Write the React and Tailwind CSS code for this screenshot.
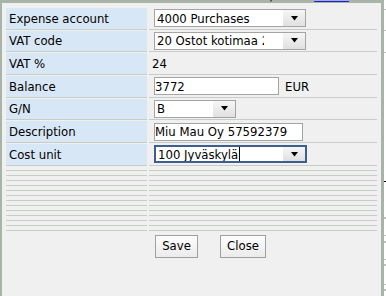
import React from 'react';

const font = { fontFamily: '"DejaVu Sans Condensed", "Liberation Sans", Arial, sans-serif' };

function Arrow() {
  return (
    <svg width="9" height="5" viewBox="0 0 9 5" className="block">
      <path d="M1 0h7L4.5 4.5z" fill="#000" />
    </svg>
  );
}

function Select({ value, width, focused }) {
  return (
    <div
      className={`flex h-[18px] ml-[5px] overflow-hidden bg-white ${
        focused ? 'border-2 border-[#3c5f8f]' : 'border border-[#a4a4a4]'
      }`}
      style={{ width }}
    >
      <div className="flex-1 min-w-0 flex items-center pl-[2px] pr-[19px]">
        <div className="flex items-center whitespace-nowrap overflow-hidden">
          {value}
          {focused && <span className="inline-block w-px h-[14px] bg-black ml-px" />}
        </div>
      </div>
      <div className="w-[22px] flex items-center justify-center bg-gradient-to-b from-[#f6f6f6] to-[#e0e0e0]">
        <Arrow />
      </div>
    </div>
  );
}

function Input({ value, width }) {
  return (
    <div
      className="flex items-center h-[18px] ml-[5px] bg-white border border-[#a4a4a4] whitespace-nowrap overflow-hidden"
      style={{ width }}
    >
      {value}
    </div>
  );
}

const rows = [
  { label: 'Expense account', field: <Select value="4000 Purchases" width={152} /> },
  { label: 'VAT code', field: <Select value="20 Ostot kotimaa 24%" width={152} /> },
  { label: 'VAT %', field: <span className="pl-[3px]">24</span> },
  {
    label: 'Balance',
    field: (
      <>
        <Input value="3772" width={125} />
        <span className="ml-[6px]">EUR</span>
      </>
    ),
  },
  { label: 'G/N', field: <Select value="B" width={82} /> },
  { label: 'Description', field: <Input value="Miu Mau Oy 57592379" width={149} /> },
  { label: 'Cost unit', field: <Select value="100 Jyväskylä" width={153} focused /> },
];

export default function App() {
  return (
    <div className="relative flex h-[296px] overflow-hidden bg-white text-[13px] text-black" style={font}>
      {/* page text peeking over the dialog top */}
      <div className="absolute top-0 left-0 right-0 h-[2px] overflow-hidden">
        <div className="flex leading-[13px] -mt-[11px] whitespace-nowrap">
          <span className="ml-[20px] text-[#555]">nnn</span>
          <span className="ml-[168px]">NNN NNN / </span>
          <span className="ml-[40px] text-[#1a1aff] underline">Poista</span>
        </div>
      </div>

      <div className="w-[384px] h-[300px] shrink-0 bg-[#f0f0f0] border-l-2 border-t-[3px] border-r-[3px] border-[#a8b4a8] pt-[5px] pl-[4px]">
        <div className="grid grid-cols-[141px_228px] gap-x-[2px] gap-y-px">
          {rows.map((r) => (
            <React.Fragment key={r.label}>
              <div className="h-[21.67px] flex items-center pl-[3px] bg-[#d8e7f5] border-b border-[#c6ccc6]">
                {r.label}
              </div>
              <div className="h-[21.67px] flex items-center border-b border-[#c6ccc6]">{r.field}</div>
            </React.Fragment>
          ))}
          {Array.from({ length: 13 }).map((_, i) => (
            <React.Fragment key={i}>
              <div className="h-[4px] border-b border-[#c6ccc6]" />
              <div className="h-[4px] border-b border-[#c6ccc6]" />
            </React.Fragment>
          ))}
          <div />
          <div className="flex gap-[22px] pl-[6px] pt-[3px]">
            <button className="w-[43px] h-[23px] border border-[#a0a0a0] bg-gradient-to-b from-[#fdfdfd] to-[#ebebeb]">
              Save
            </button>
            <button className="w-[46px] h-[23px] border border-[#a0a0a0] bg-gradient-to-b from-[#fdfdfd] to-[#ebebeb]">
              Close
            </button>
          </div>
        </div>
      </div>

      {/* background table edge on the right */}
      <div className="flex-1 flex flex-col">
        <div className="h-px mt-[9px] bg-[#c0c0c0]" />
        <div className="h-px mt-[20px] bg-[#c0c0c0]" />
        <div className="h-px mt-[21px] bg-[#c0c0c0]" />
        <div className="h-px mt-[128px] bg-black" />
        <div className="h-[2px] mt-[35px] bg-[#c0c0c0]" />
        <div className="h-px mt-[16px] bg-[#c0c0c0]" />
        <div className="h-[2px] mt-[5px] bg-[#c0c0c0]" />
        <div className="h-px mt-[16px] bg-[#c0c0c0]" />
        <div className="h-[2px] mt-[4px] bg-[#c0c0c0]" />
        <div className="h-px mt-[18px] bg-[#c0c0c0]" />
        <div className="h-[2px] mt-[4px] bg-[#c0c0c0]" />
      </div>
    </div>
  );
}
